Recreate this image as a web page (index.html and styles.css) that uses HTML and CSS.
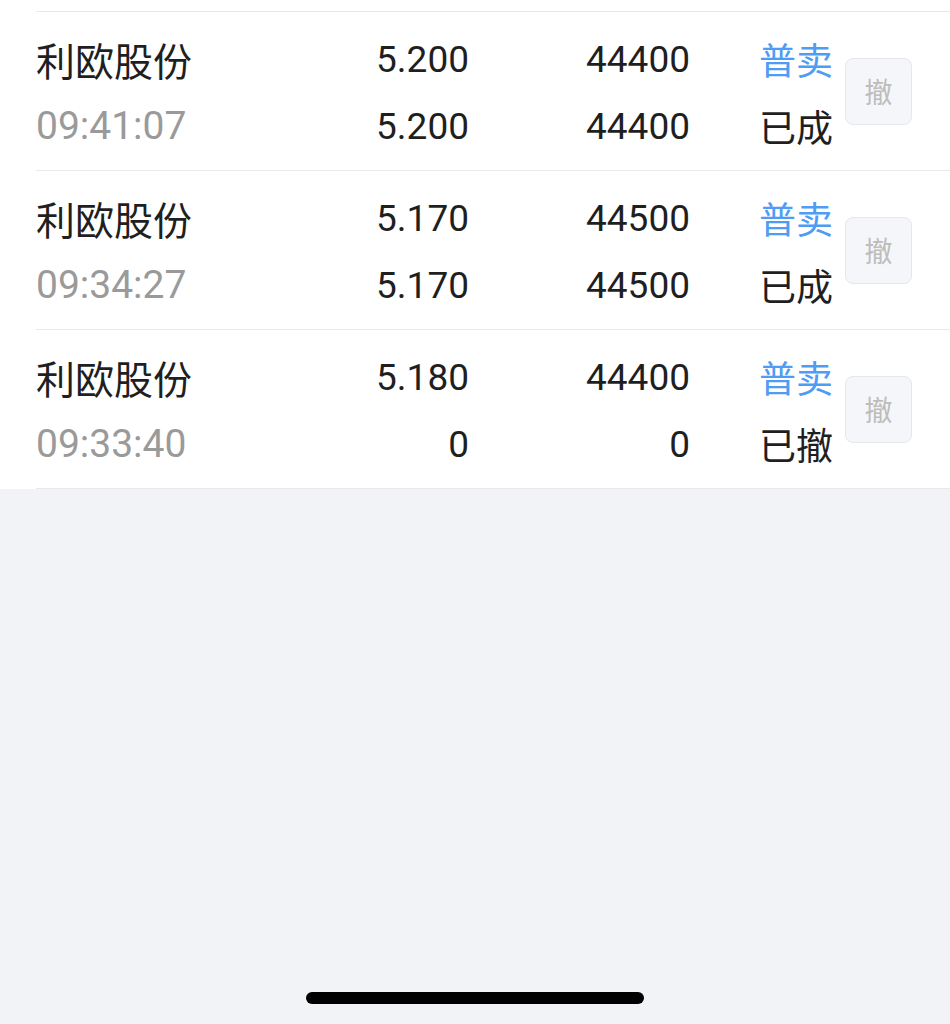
FILE: index.html
```html
<!DOCTYPE html>
<html lang="zh-CN">
<head>
<meta charset="utf-8">
<title>委托列表</title>
<link rel="stylesheet" href="styles.css">
</head>
<body>
<div class="page">
  <div class="list">
    <div class="stub"></div>
    <div class="row">
      <div class="cells">
        <div class="name">利欧股份</div>
        <div class="num">5.200</div>
        <div class="num">44400</div>
        <div class="status type">普卖</div>
        <div class="time">09:41:07</div>
        <div class="num">5.200</div>
        <div class="num">44400</div>
        <div class="status">已成</div>
      </div>
      <button class="cancel">撤</button>
    </div>
    <div class="row">
      <div class="cells">
        <div class="name">利欧股份</div>
        <div class="num">5.170</div>
        <div class="num">44500</div>
        <div class="status type">普卖</div>
        <div class="time">09:34:27</div>
        <div class="num">5.170</div>
        <div class="num">44500</div>
        <div class="status">已成</div>
      </div>
      <button class="cancel">撤</button>
    </div>
    <div class="row">
      <div class="cells">
        <div class="name">利欧股份</div>
        <div class="num">5.180</div>
        <div class="num">44400</div>
        <div class="status type">普卖</div>
        <div class="time">09:33:40</div>
        <div class="num">0</div>
        <div class="num">0</div>
        <div class="status">已撤</div>
      </div>
      <button class="cancel">撤</button>
    </div>
  </div>
  <div class="home-bar"></div>
</div>
</body>
</html>
```

FILE: styles.css
```css
* { box-sizing: border-box; }
html, body {
  margin: 0;
  padding: 0;
}
body {
  background: #f2f3f7;
  font-family: Roboto, "Noto Sans CJK SC", sans-serif;
  color: #1f1f1f;
}
.page {
  min-height: 1024px;
  display: flex;
  flex-direction: column;
}
.list {
  background: #ffffff;
}
.stub {
  height: 12px;
  margin-left: 36px;
  border-bottom: 1px solid #e9e9ec;
}
.row {
  height: 159px;
  margin-left: 36px;
  border-bottom: 1px solid #e9e9ec;
  display: flex;
  align-items: center;
}
.cells {
  display: grid;
  grid-template-columns: 264px 169px 221px auto;
  grid-auto-rows: 67px;
  align-items: center;
  padding-top: 3px;
  font-size: 37px;
  line-height: 67px;
}
.name {
  font-family: "Noto Sans CJK SC", sans-serif;
  font-size: 39px;
}
.time {
  color: #9a9a9a;
  font-size: 39px;
}
.num {
  text-align: right;
}
.status {
  padding-left: 69px;
  font-family: "Noto Sans CJK SC", sans-serif;
  font-size: 37px;
  white-space: nowrap;
}
.type {
  color: #4f9cf4;
}
.cancel {
  width: 67px;
  height: 67px;
  margin-left: 12px;
  padding: 0;
  border: 1px solid #e6e7ec;
  border-radius: 8px;
  background: #f5f6f9;
  color: #bdbdbd;
  font-family: "Noto Sans CJK SC", sans-serif;
  font-size: 28px;
}
.home-bar {
  width: 338px;
  height: 12px;
  border-radius: 6px;
  background: #000000;
  margin: auto auto 20px;
}
```
